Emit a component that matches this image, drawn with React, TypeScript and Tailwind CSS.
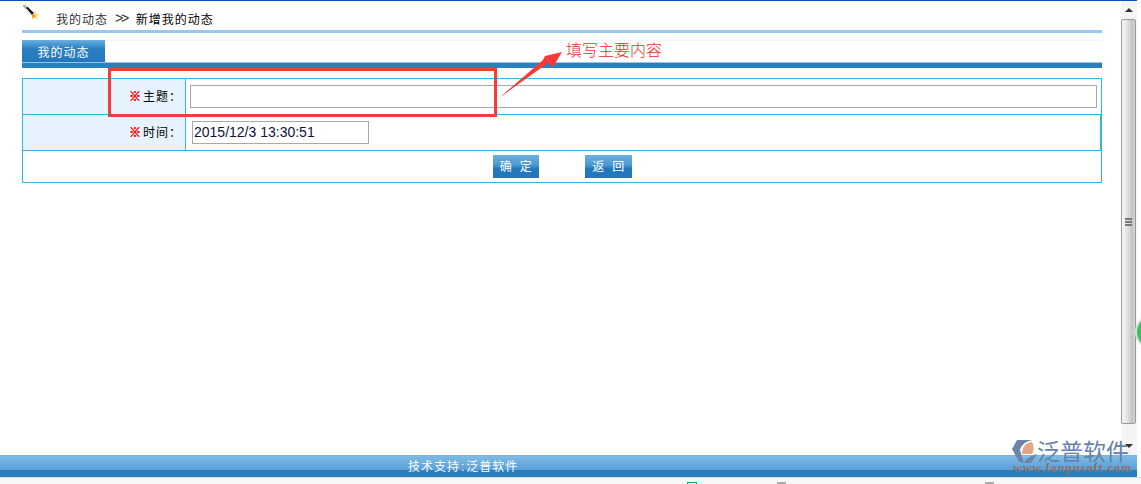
const cjk = "font-['Liberation_Sans','Noto_Sans_CJK_SC',sans-serif]";

function Row({ label, children, right }: { label: string; children: React.ReactNode; right?: string }) {
  return (
    <div className={`flex h-[36px] border-b border-[#33b5e8] ${right ?? ""}`}>
      <div className="w-[163px] shrink-0 bg-[#e6f3fe] border-r border-[#33b5e8] flex items-center justify-end pr-[3px] text-[12px] tracking-[1px] text-black">
        <span className="text-[#f00] font-bold mr-[1px] [-webkit-text-stroke:0.5px_#f00]">※</span>
        <span>{label}：</span>
      </div>
      <div className="flex-1 flex items-center">{children}</div>
    </div>
  );
}

function Btn({ text, w }: { text: string; w: string }) {
  return (
    <div className={`${w} h-[23px] bg-[linear-gradient(#6db1df,#4a97d0_45%,#2178bc_60%,#2178bc)] text-white text-[12px] tracking-[0.5px] flex items-center justify-center whitespace-pre`}>
      {text}
    </div>
  );
}

export default function App() {
  return (
    <div className={`relative w-[1141px] h-[484px] overflow-hidden bg-white flex flex-col ${cjk}`}>
      <div className="w-[1137px] h-px bg-[#0055b4] shrink-0" />
      <div className="flex w-[1137px] h-[454px] shrink-0">
        <main className="flex-1 pl-[22px] pr-[19px] min-w-0">
          <div className="flex items-center h-[29px] pt-[8px] relative text-[12px] tracking-[1px]">
            <svg className="absolute left-0 top-[3px]" width="18" height="18" viewBox="0 0 18 18">
              <path d="M1 2 L3 1 L5 3 L4 5 Z" fill="#b9c6d6" stroke="#7d8b9c" strokeWidth="0.6" />
              <path d="M4 4 L5.5 2.8 L12 9 L10 11 Z" fill="#15181c" />
              <path d="M13 6.5 L13.8 9.6 L17 10 L14.6 12 L15.5 15.5 L12.4 14 L9.8 16 L10.2 12.5 Z" fill="#f7dc6a" />
              <path d="M10.5 10.5 L13 11 L12 13.5 L10 13 Z" fill="#e58a2a" />
            </svg>
            <span className="ml-[34px] text-[#333]">我的动态</span>
            <span className="ml-[7px] text-[14px] text-[#333] font-['Liberation_Mono',monospace] tracking-[-2.5px]">&gt;&gt;</span>
            <span className="ml-[9px] text-black">新增我的动态</span>
          </div>
          <div className="h-[3px] bg-[#99c9f0]" />
          <div className="mt-[7px] h-[28px] flex flex-col">
            <div className="flex h-[22px] border-t border-[#f3f5f7]">
              <div className="w-[83px] -mt-px h-[22px] pt-[3px] bg-[linear-gradient(#6aafdf,#2a80c2_40%,#2178bc)] text-white text-[12px] tracking-[1px] flex items-center justify-center">
                我的动态
              </div>
            </div>
            <div className="h-[6px] bg-[#2880bf] border-t border-[#9fc3dc]" />
          </div>
          <div className="mt-[10px] border border-[#33b5e8] border-b-0">
            <Row label="主题">
              <div className="ml-[4px] w-[907px] h-[23px] border border-[#a9a9a9] bg-white" />
            </Row>
            <Row label="时间" right="border-r">
              <div className="ml-[6px] w-[177px] h-[23px] border border-[#a9a9a9] bg-white flex items-center pl-[1px] text-[14px] text-[#101040] font-['Liberation_Sans',sans-serif]">
                2015/12/3 13:30:51
              </div>
            </Row>
            <div className="h-[32px] border-b border-[#33b5e8] flex items-start pt-[4px] pl-[470px] gap-[46px]">
              <Btn text="确  定" w="w-[46px]" />
              <Btn text="返  回" w="w-[47px]" />
            </div>
          </div>
        </main>
        <aside className="w-[16px] shrink-0 bg-[#f4f4f4] flex flex-col items-center">
          <div className="h-[18px] w-full flex items-center justify-center">
            <div className="w-0 h-0 border-x-[4px] border-x-transparent border-b-[4px] border-b-[#333]" />
          </div>
          <div className="w-[15px] self-start h-[405px] border border-[#9a9a9a] rounded-[2px] bg-[linear-gradient(90deg,#f6f6f6,#e6e6e6_35%,#c4c4c4_80%,#d6d6d6)] flex flex-col items-center justify-center gap-[1px]">
            <div className="w-[7px] h-[2px] bg-[#7a7a7a]" />
            <div className="w-[7px] h-[2px] bg-[#7a7a7a]" />
            <div className="w-[7px] h-[2px] bg-[#7a7a7a]" />
          </div>
          <div className="flex-1 w-full flex items-end justify-center pb-[7px]">
            <div className="w-0 h-0 border-x-[4px] border-x-transparent border-t-[4px] border-t-[#333]" />
          </div>
        </aside>
      </div>
      <footer className="w-[1137px] h-[22px] shrink-0 bg-[linear-gradient(#7ebbe6_0%,#5a9fd6_65%,#2b7ebb_66%,#2b7ebb_100%)] border-t border-[#7cb2e8] text-white text-[12px] tracking-[1px] flex items-center pl-[408px]">
        技术支持<span className="px-[1px]">:</span>泛普软件
      </footer>
      <div className="flex-1 bg-[#f7f7f7] border-t border-[#dddddd]" />

      {/* bottom strip fragments */}
      <div className="absolute left-[687px] top-[482px] w-[10px] h-[4px] border border-[#00b050] bg-white" />
      <div className="absolute left-[777px] top-[482px] w-[9px] h-[2px] bg-[#aaa]" />
      <div className="absolute left-[985px] top-[482px] w-[9px] h-[2px] bg-[#aaa]" />

      {/* annotation */}
      <div className="absolute left-[108px] top-[68px] w-[389px] h-[49px] border-[3px] border-[#f83a3a]" />
      <svg className="absolute left-[495px] top-[48px]" width="72" height="54" viewBox="0 0 72 54">
        <path d="M4 50 L48 12 L50 8 L67 4 L58 19 L53 15 Z" fill="#f83a3a" />
      </svg>
      <div className="absolute left-[566px] top-[40px] text-[16px] leading-[22px] font-light text-[#f52a2a]">填写主要内容</div>

      {/* green floating button at the edge */}
      <div className="absolute left-[1135px] top-[314px] w-[36px] h-[36px] rounded-full bg-[#35c45c] border-2 border-[#dddddd]" />

      {/* watermark */}
      <div className="absolute left-[1011px] top-[438px] w-[124px] h-[38px]">
        <svg className="absolute left-0 top-[2px]" width="26" height="24" viewBox="0 0 26 24">
          <path d="M1 9 L6 0 H22 C15 1 10 5 9 10 L13 23 L8 22 Z" fill="#6d86a8" />
          <path d="M11 14 C11 7 15 2 21 2 C23 6 23 11 21 14 Z" fill="#e4a58a" />
          <path d="M13 23 C15 18 20 16 26 14 L20 23 Z" fill="#6d86a8" />
        </svg>
        <div className="absolute left-[26px] top-0 text-[23px] leading-[24px] text-[#6482aa] whitespace-nowrap font-['Noto_Sans_CJK_SC',sans-serif]">泛普软件</div>
        <div className="absolute left-[2px] top-[24px] text-[12px] leading-[12px] font-bold tracking-[1.05px] text-[#8f6f68] whitespace-nowrap font-['Liberation_Serif',serif]">www.fanpusoft.com</div>
      </div>
    </div>
  );
}
